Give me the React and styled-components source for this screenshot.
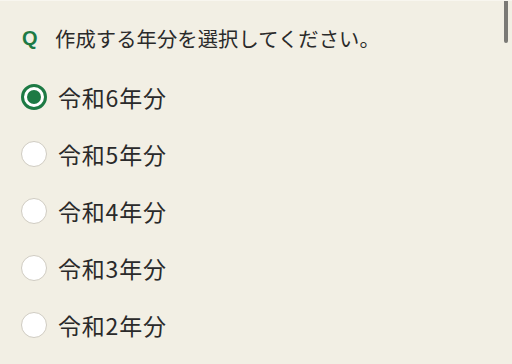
import React, { useState } from "react";
import styled, { createGlobalStyle } from "styled-components";

const colors = {
  background: "#f2efe4",
  text: "#2a2a2a",
  green: "#1d7a44",
  radioBorder: "#d0ccc2",
};

const GlobalStyle = createGlobalStyle`
  html, body {
    margin: 0;
    padding: 0;
    background-color: ${colors.background};
  }
  body {
    font-family: "Noto Sans CJK JP", "Noto Sans", sans-serif;
    color: ${colors.text};
  }
`;

const Page = styled.div`
  position: relative;
  width: 512px;
  height: 364px;
  overflow: hidden;
  background-color: ${colors.background};
  border-top: 1px solid #f8f6ef;
  box-sizing: border-box;
`;

const Question = styled.div`
  display: flex;
  align-items: center;
  height: 28px;
  margin: 23px 0 0 22px;
`;

const QMark = styled.span`
  width: 33px;
  font-family: "Liberation Sans", Arial, sans-serif;
  font-weight: 700;
  font-size: 20px;
  color: ${colors.green};
`;

const QuestionText = styled.span`
  font-size: 20.3px;
  letter-spacing: 0.1px;
`;

const OptionList = styled.ul`
  list-style: none;
  margin: 16px 0 0 0;
  padding: 0;
`;

const Option = styled.li`
  display: flex;
  align-items: center;
  height: 57px;
  padding-left: 21px;
  cursor: pointer;
`;

const Radio = styled.span`
  box-sizing: border-box;
  width: 26px;
  height: 26px;
  border-radius: 50%;
  background-color: #fff;
  border: ${(p) => (p.$checked ? `3px solid ${colors.green}` : `1.5px solid ${colors.radioBorder}`)};
  display: flex;
  align-items: center;
  justify-content: center;
  flex-shrink: 0;

  &::after {
    content: "";
    display: ${(p) => (p.$checked ? "block" : "none")};
    width: 14px;
    height: 14px;
    border-radius: 50%;
    background-color: ${colors.green};
  }
`;

const Label = styled.span`
  margin-left: 11px;
  font-size: 23px;
  letter-spacing: 0.8px;
`;

const ScrollThumb = styled.div`
  position: absolute;
  top: 0;
  right: 4px;
  width: 4px;
  height: 42px;
  border-radius: 0 0 2px 2px;
  background-color: #7b7a76;
`;

const years = [6, 5, 4, 3, 2];

const App = () => {
  const [selected, setSelected] = useState(6);

  return (
    <Page>
      <GlobalStyle />
      <Question>
        <QMark>Q</QMark>
        <QuestionText>作成する年分を選択してください。</QuestionText>
      </Question>
      <OptionList>
        {years.map((y) => (
          <Option key={y} onClick={() => setSelected(y)}>
            <Radio $checked={selected === y} />
            <Label>令和{y}年分</Label>
          </Option>
        ))}
      </OptionList>
      <ScrollThumb />
    </Page>
  );
};

export default App;
